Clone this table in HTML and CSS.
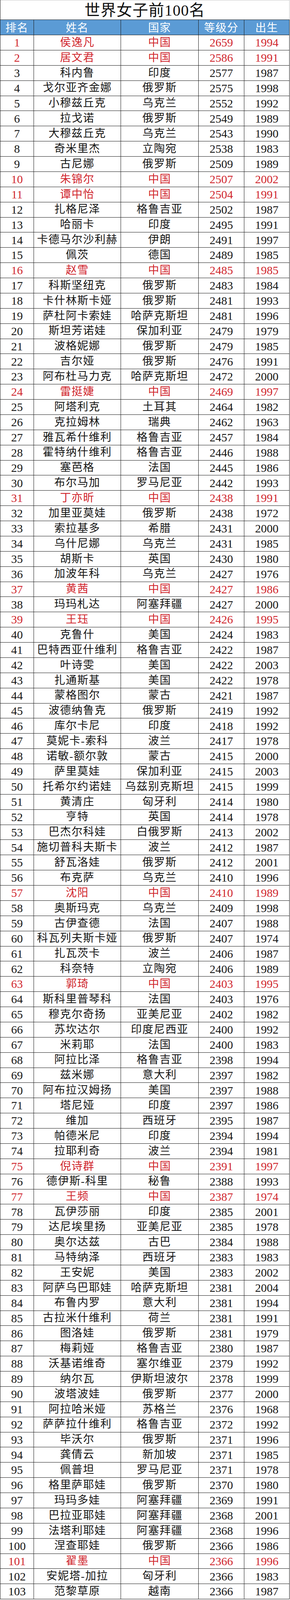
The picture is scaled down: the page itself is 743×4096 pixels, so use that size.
FILE: index.html
```html
<!DOCTYPE html>
<html lang="zh-CN">
<head>
<meta charset="utf-8">
<title>世界女子前100名</title>
<link rel="stylesheet" href="styles.css">
</head>
<body>
<div class="sheet">
  <div class="title">世界女子前100名</div>
  <div class="row head">
    <div class="c">排名</div><div class="c">姓名</div><div class="c">国家</div><div class="c">等级分</div><div class="c">出生</div>
  </div>
  <div class="row red"><div class="c n">1</div><div class="c t">侯逸凡</div><div class="c t">中国</div><div class="c n">2659</div><div class="c n">1994</div></div>
  <div class="row red"><div class="c n">2</div><div class="c t">居文君</div><div class="c t">中国</div><div class="c n">2586</div><div class="c n">1991</div></div>
  <div class="row"><div class="c n">3</div><div class="c t">科内鲁</div><div class="c t">印度</div><div class="c n">2577</div><div class="c n">1987</div></div>
  <div class="row"><div class="c n">4</div><div class="c t">戈尔亚齐金娜</div><div class="c t">俄罗斯</div><div class="c n">2575</div><div class="c n">1998</div></div>
  <div class="row"><div class="c n">5</div><div class="c t">小穆兹丘克</div><div class="c t">乌克兰</div><div class="c n">2552</div><div class="c n">1992</div></div>
  <div class="row"><div class="c n">6</div><div class="c t">拉戈诺</div><div class="c t">俄罗斯</div><div class="c n">2549</div><div class="c n">1989</div></div>
  <div class="row"><div class="c n">7</div><div class="c t">大穆兹丘克</div><div class="c t">乌克兰</div><div class="c n">2543</div><div class="c n">1990</div></div>
  <div class="row"><div class="c n">8</div><div class="c t">奇米里杰</div><div class="c t">立陶宛</div><div class="c n">2538</div><div class="c n">1983</div></div>
  <div class="row"><div class="c n">9</div><div class="c t">古尼娜</div><div class="c t">俄罗斯</div><div class="c n">2509</div><div class="c n">1989</div></div>
  <div class="row red"><div class="c n">10</div><div class="c t">朱锦尔</div><div class="c t">中国</div><div class="c n">2507</div><div class="c n">2002</div></div>
  <div class="row red"><div class="c n">11</div><div class="c t">谭中怡</div><div class="c t">中国</div><div class="c n">2504</div><div class="c n">1991</div></div>
  <div class="row"><div class="c n">12</div><div class="c t">扎格尼泽</div><div class="c t">格鲁吉亚</div><div class="c n">2502</div><div class="c n">1987</div></div>
  <div class="row"><div class="c n">13</div><div class="c t">哈丽卡</div><div class="c t">印度</div><div class="c n">2495</div><div class="c n">1991</div></div>
  <div class="row"><div class="c n">14</div><div class="c t">卡德马尔沙利赫</div><div class="c t">伊朗</div><div class="c n">2491</div><div class="c n">1997</div></div>
  <div class="row"><div class="c n">15</div><div class="c t">佩茨</div><div class="c t">德国</div><div class="c n">2489</div><div class="c n">1985</div></div>
  <div class="row red"><div class="c n">16</div><div class="c t">赵雪</div><div class="c t">中国</div><div class="c n">2485</div><div class="c n">1985</div></div>
  <div class="row"><div class="c n">17</div><div class="c t">科斯坚纽克</div><div class="c t">俄罗斯</div><div class="c n">2483</div><div class="c n">1984</div></div>
  <div class="row"><div class="c n">18</div><div class="c t">卡什林斯卡娅</div><div class="c t">俄罗斯</div><div class="c n">2481</div><div class="c n">1993</div></div>
  <div class="row"><div class="c n">19</div><div class="c t">萨杜阿卡索娃</div><div class="c t">哈萨克斯坦</div><div class="c n">2481</div><div class="c n">1996</div></div>
  <div class="row"><div class="c n">20</div><div class="c t">斯坦芳诺娃</div><div class="c t">保加利亚</div><div class="c n">2479</div><div class="c n">1979</div></div>
  <div class="row"><div class="c n">21</div><div class="c t">波格妮娜</div><div class="c t">俄罗斯</div><div class="c n">2479</div><div class="c n">1985</div></div>
  <div class="row"><div class="c n">22</div><div class="c t">吉尔娅</div><div class="c t">俄罗斯</div><div class="c n">2476</div><div class="c n">1991</div></div>
  <div class="row"><div class="c n">23</div><div class="c t">阿布杜马力克</div><div class="c t">哈萨克斯坦</div><div class="c n">2472</div><div class="c n">2000</div></div>
  <div class="row red"><div class="c n">24</div><div class="c t">雷挺婕</div><div class="c t">中国</div><div class="c n">2469</div><div class="c n">1997</div></div>
  <div class="row"><div class="c n">25</div><div class="c t">阿塔利克</div><div class="c t">土耳其</div><div class="c n">2464</div><div class="c n">1982</div></div>
  <div class="row"><div class="c n">26</div><div class="c t">克拉姆林</div><div class="c t">瑞典</div><div class="c n">2462</div><div class="c n">1963</div></div>
  <div class="row"><div class="c n">27</div><div class="c t">雅瓦希什维利</div><div class="c t">格鲁吉亚</div><div class="c n">2457</div><div class="c n">1984</div></div>
  <div class="row"><div class="c n">28</div><div class="c t">霍特纳什维利</div><div class="c t">格鲁吉亚</div><div class="c n">2446</div><div class="c n">1988</div></div>
  <div class="row"><div class="c n">29</div><div class="c t">塞芭格</div><div class="c t">法国</div><div class="c n">2445</div><div class="c n">1986</div></div>
  <div class="row"><div class="c n">30</div><div class="c t">布尔马加</div><div class="c t">罗马尼亚</div><div class="c n">2442</div><div class="c n">1993</div></div>
  <div class="row red"><div class="c n">31</div><div class="c t">丁亦昕</div><div class="c t">中国</div><div class="c n">2438</div><div class="c n">1991</div></div>
  <div class="row"><div class="c n">32</div><div class="c t">加里亚莫娃</div><div class="c t">俄罗斯</div><div class="c n">2438</div><div class="c n">1972</div></div>
  <div class="row"><div class="c n">33</div><div class="c t">索拉基多</div><div class="c t">希腊</div><div class="c n">2431</div><div class="c n">2000</div></div>
  <div class="row"><div class="c n">34</div><div class="c t">乌什尼娜</div><div class="c t">乌克兰</div><div class="c n">2431</div><div class="c n">1985</div></div>
  <div class="row"><div class="c n">35</div><div class="c t">胡斯卡</div><div class="c t">英国</div><div class="c n">2430</div><div class="c n">1980</div></div>
  <div class="row"><div class="c n">36</div><div class="c t">加波年科</div><div class="c t">乌克兰</div><div class="c n">2427</div><div class="c n">1976</div></div>
  <div class="row red"><div class="c n">37</div><div class="c t">黄茜</div><div class="c t">中国</div><div class="c n">2427</div><div class="c n">1986</div></div>
  <div class="row"><div class="c n">38</div><div class="c t">玛玛札达</div><div class="c t">阿塞拜疆</div><div class="c n">2427</div><div class="c n">2000</div></div>
  <div class="row red"><div class="c n">39</div><div class="c t">王珏</div><div class="c t">中国</div><div class="c n">2426</div><div class="c n">1995</div></div>
  <div class="row"><div class="c n">40</div><div class="c t">克鲁什</div><div class="c t">美国</div><div class="c n">2424</div><div class="c n">1983</div></div>
  <div class="row"><div class="c n">41</div><div class="c t">巴特西亚什维利</div><div class="c t">格鲁吉亚</div><div class="c n">2422</div><div class="c n">1987</div></div>
  <div class="row"><div class="c n">42</div><div class="c t">叶诗雯</div><div class="c t">美国</div><div class="c n">2422</div><div class="c n">2003</div></div>
  <div class="row"><div class="c n">43</div><div class="c t">扎通斯基</div><div class="c t">美国</div><div class="c n">2422</div><div class="c n">1978</div></div>
  <div class="row"><div class="c n">44</div><div class="c t">蒙格图尔</div><div class="c t">蒙古</div><div class="c n">2421</div><div class="c n">1987</div></div>
  <div class="row"><div class="c n">45</div><div class="c t">波德纳鲁克</div><div class="c t">俄罗斯</div><div class="c n">2419</div><div class="c n">1992</div></div>
  <div class="row"><div class="c n">46</div><div class="c t">库尔卡尼</div><div class="c t">印度</div><div class="c n">2418</div><div class="c n">1992</div></div>
  <div class="row"><div class="c n">47</div><div class="c t">莫妮卡-索科</div><div class="c t">波兰</div><div class="c n">2417</div><div class="c n">1978</div></div>
  <div class="row"><div class="c n">48</div><div class="c t">诺敏-额尔敦</div><div class="c t">蒙古</div><div class="c n">2415</div><div class="c n">2000</div></div>
  <div class="row"><div class="c n">49</div><div class="c t">萨里莫娃</div><div class="c t">保加利亚</div><div class="c n">2415</div><div class="c n">2003</div></div>
  <div class="row"><div class="c n">50</div><div class="c t">托希尔约诺娃</div><div class="c t">乌兹别克斯坦</div><div class="c n">2415</div><div class="c n">1999</div></div>
  <div class="row"><div class="c n">51</div><div class="c t">黄清庄</div><div class="c t">匈牙利</div><div class="c n">2414</div><div class="c n">1980</div></div>
  <div class="row"><div class="c n">52</div><div class="c t">亨特</div><div class="c t">英国</div><div class="c n">2414</div><div class="c n">1978</div></div>
  <div class="row"><div class="c n">53</div><div class="c t">巴杰尔科娃</div><div class="c t">白俄罗斯</div><div class="c n">2413</div><div class="c n">2002</div></div>
  <div class="row"><div class="c n">54</div><div class="c t">施切普科夫斯卡</div><div class="c t">波兰</div><div class="c n">2412</div><div class="c n">1987</div></div>
  <div class="row"><div class="c n">55</div><div class="c t">舒瓦洛娃</div><div class="c t">俄罗斯</div><div class="c n">2412</div><div class="c n">2001</div></div>
  <div class="row"><div class="c n">56</div><div class="c t">布克萨</div><div class="c t">乌克兰</div><div class="c n">2410</div><div class="c n">1996</div></div>
  <div class="row red"><div class="c n">57</div><div class="c t">沈阳</div><div class="c t">中国</div><div class="c n">2410</div><div class="c n">1989</div></div>
  <div class="row"><div class="c n">58</div><div class="c t">奥斯玛克</div><div class="c t">乌克兰</div><div class="c n">2409</div><div class="c n">1998</div></div>
  <div class="row"><div class="c n">59</div><div class="c t">古伊查德</div><div class="c t">法国</div><div class="c n">2407</div><div class="c n">1988</div></div>
  <div class="row"><div class="c n">60</div><div class="c t">科瓦列夫斯卡娅</div><div class="c t">俄罗斯</div><div class="c n">2407</div><div class="c n">1974</div></div>
  <div class="row"><div class="c n">61</div><div class="c t">扎瓦茨卡</div><div class="c t">波兰</div><div class="c n">2406</div><div class="c n">1987</div></div>
  <div class="row"><div class="c n">62</div><div class="c t">科奈特</div><div class="c t">立陶宛</div><div class="c n">2406</div><div class="c n">1989</div></div>
  <div class="row red"><div class="c n">63</div><div class="c t">郭琦</div><div class="c t">中国</div><div class="c n">2403</div><div class="c n">1995</div></div>
  <div class="row"><div class="c n">64</div><div class="c t">斯科里普琴科</div><div class="c t">法国</div><div class="c n">2403</div><div class="c n">1976</div></div>
  <div class="row"><div class="c n">65</div><div class="c t">穆克尔奇扬</div><div class="c t">亚美尼亚</div><div class="c n">2402</div><div class="c n">1982</div></div>
  <div class="row"><div class="c n">66</div><div class="c t">苏坎达尔</div><div class="c t">印度尼西亚</div><div class="c n">2400</div><div class="c n">1992</div></div>
  <div class="row"><div class="c n">67</div><div class="c t">米莉耶</div><div class="c t">法国</div><div class="c n">2400</div><div class="c n">1983</div></div>
  <div class="row"><div class="c n">68</div><div class="c t">阿拉比泽</div><div class="c t">格鲁吉亚</div><div class="c n">2398</div><div class="c n">1994</div></div>
  <div class="row"><div class="c n">69</div><div class="c t">兹米娜</div><div class="c t">意大利</div><div class="c n">2397</div><div class="c n">1982</div></div>
  <div class="row"><div class="c n">70</div><div class="c t">阿布拉汉姆扬</div><div class="c t">美国</div><div class="c n">2397</div><div class="c n">1988</div></div>
  <div class="row"><div class="c n">71</div><div class="c t">塔尼娅</div><div class="c t">印度</div><div class="c n">2397</div><div class="c n">1986</div></div>
  <div class="row"><div class="c n">72</div><div class="c t">维加</div><div class="c t">西班牙</div><div class="c n">2395</div><div class="c n">1987</div></div>
  <div class="row"><div class="c n">73</div><div class="c t">帕德米尼</div><div class="c t">印度</div><div class="c n">2394</div><div class="c n">1994</div></div>
  <div class="row"><div class="c n">74</div><div class="c t">拉耶利奇</div><div class="c t">波兰</div><div class="c n">2394</div><div class="c n">1981</div></div>
  <div class="row red"><div class="c n">75</div><div class="c t">倪诗群</div><div class="c t">中国</div><div class="c n">2391</div><div class="c n">1997</div></div>
  <div class="row"><div class="c n">76</div><div class="c t">德伊斯-科里</div><div class="c t">秘鲁</div><div class="c n">2388</div><div class="c n">1993</div></div>
  <div class="row red"><div class="c n">77</div><div class="c t">王频</div><div class="c t">中国</div><div class="c n">2387</div><div class="c n">1974</div></div>
  <div class="row"><div class="c n">78</div><div class="c t">瓦伊莎丽</div><div class="c t">印度</div><div class="c n">2385</div><div class="c n">2001</div></div>
  <div class="row"><div class="c n">79</div><div class="c t">达尼埃里扬</div><div class="c t">亚美尼亚</div><div class="c n">2385</div><div class="c n">1978</div></div>
  <div class="row"><div class="c n">80</div><div class="c t">奥尔达兹</div><div class="c t">古巴</div><div class="c n">2384</div><div class="c n">1988</div></div>
  <div class="row"><div class="c n">81</div><div class="c t">马特纳泽</div><div class="c t">西班牙</div><div class="c n">2383</div><div class="c n">1983</div></div>
  <div class="row"><div class="c n">82</div><div class="c t">王安妮</div><div class="c t">美国</div><div class="c n">2383</div><div class="c n">2002</div></div>
  <div class="row"><div class="c n">83</div><div class="c t">阿萨乌巴耶娃</div><div class="c t">哈萨克斯坦</div><div class="c n">2381</div><div class="c n">2004</div></div>
  <div class="row"><div class="c n">84</div><div class="c t">布鲁内罗</div><div class="c t">意大利</div><div class="c n">2381</div><div class="c n">1994</div></div>
  <div class="row"><div class="c n">85</div><div class="c t">古拉米什维利</div><div class="c t">荷兰</div><div class="c n">2381</div><div class="c n">1991</div></div>
  <div class="row"><div class="c n">86</div><div class="c t">图洛娃</div><div class="c t">俄罗斯</div><div class="c n">2381</div><div class="c n">1979</div></div>
  <div class="row"><div class="c n">87</div><div class="c t">梅莉娅</div><div class="c t">格鲁吉亚</div><div class="c n">2380</div><div class="c n">1987</div></div>
  <div class="row"><div class="c n">88</div><div class="c t">沃基诺维奇</div><div class="c t">塞尔维亚</div><div class="c n">2379</div><div class="c n">1992</div></div>
  <div class="row"><div class="c n">89</div><div class="c t">纳尔瓦</div><div class="c t">伊斯坦波尔</div><div class="c n">2378</div><div class="c n">1999</div></div>
  <div class="row"><div class="c n">90</div><div class="c t">波塔波娃</div><div class="c t">俄罗斯</div><div class="c n">2377</div><div class="c n">2000</div></div>
  <div class="row"><div class="c n">91</div><div class="c t">阿拉哈米娅</div><div class="c t">苏格兰</div><div class="c n">2376</div><div class="c n">1968</div></div>
  <div class="row"><div class="c n">92</div><div class="c t">萨萨拉什维利</div><div class="c t">格鲁吉亚</div><div class="c n">2372</div><div class="c n">1992</div></div>
  <div class="row"><div class="c n">93</div><div class="c t">毕沃尔</div><div class="c t">俄罗斯</div><div class="c n">2371</div><div class="c n">1996</div></div>
  <div class="row"><div class="c n">94</div><div class="c t">龚倩云</div><div class="c t">新加坡</div><div class="c n">2371</div><div class="c n">1985</div></div>
  <div class="row"><div class="c n">95</div><div class="c t">佩普坦</div><div class="c t">罗马尼亚</div><div class="c n">2371</div><div class="c n">1978</div></div>
  <div class="row"><div class="c n">96</div><div class="c t">格里萨耶娃</div><div class="c t">俄罗斯</div><div class="c n">2370</div><div class="c n">1980</div></div>
  <div class="row"><div class="c n">97</div><div class="c t">玛玛多娃</div><div class="c t">阿塞拜疆</div><div class="c n">2369</div><div class="c n">1991</div></div>
  <div class="row"><div class="c n">98</div><div class="c t">巴拉亚耶娃</div><div class="c t">阿塞拜疆</div><div class="c n">2368</div><div class="c n">2001</div></div>
  <div class="row"><div class="c n">99</div><div class="c t">法塔利耶娃</div><div class="c t">阿塞拜疆</div><div class="c n">2368</div><div class="c n">1996</div></div>
  <div class="row"><div class="c n">100</div><div class="c t">涅查耶娃</div><div class="c t">俄罗斯</div><div class="c n">2366</div><div class="c n">1986</div></div>
  <div class="row red"><div class="c n">101</div><div class="c t">翟墨</div><div class="c t">中国</div><div class="c n">2366</div><div class="c n">1996</div></div>
  <div class="row"><div class="c n">102</div><div class="c t">安妮塔-加拉</div><div class="c t">匈牙利</div><div class="c n">2366</div><div class="c n">1983</div></div>
  <div class="row"><div class="c n">103</div><div class="c t">范黎草原</div><div class="c t">越南</div><div class="c n">2366</div><div class="c n">1987</div></div>
</div>
</body>
</html>
```

FILE: styles.css
```css
html, body {
  margin: 0;
  padding: 0;
  background: #ffffff;
}

.sheet {
  width: 742px;
  box-sizing: border-box;
  border-left: 1px solid #1a1a1a;
  font-family: "Liberation Serif", "Noto Sans CJK SC", serif;
  color: #151515;
}

.title {
  height: 50px;
  box-sizing: border-box;
  border-top: 1px solid #c8c8c8;
  border-right: 1px solid #c8c8c8;
  display: flex;
  align-items: center;
  justify-content: center;
  padding-top: 3px;
  font-size: 40px;
  line-height: 1.1;
  letter-spacing: 1px;
  color: #111;
}

.row {
  display: grid;
  grid-template-columns: 86px 223px 199px 117px 116px;
  height: 38.89px;
  box-sizing: border-box;
  border-bottom: 1px solid #1a1a1a;
}

.c {
  box-sizing: border-box;
  border-right: 1px solid #1a1a1a;
  display: flex;
  align-items: center;
  justify-content: center;
  white-space: nowrap;
  line-height: 1.15;
}

.head {
  height: 40px;
  border-top: 1px solid #2a2a2a;
  background: #5b9bd5;
}

.head .c {
  color: #ffffff;
  font-family: "Noto Sans CJK SC", sans-serif;
  font-size: 28px;
  line-height: 1.2;
  letter-spacing: 1.5px;
}

.t {
  font-family: "Liberation Serif", "Noto Sans CJK SC", serif;
  font-size: 28px;
  letter-spacing: 1.5px;
}

.n {
  font-size: 30px;
  padding-top: 1px;
}

.red .c {
  color: #d0262d;
}
```
